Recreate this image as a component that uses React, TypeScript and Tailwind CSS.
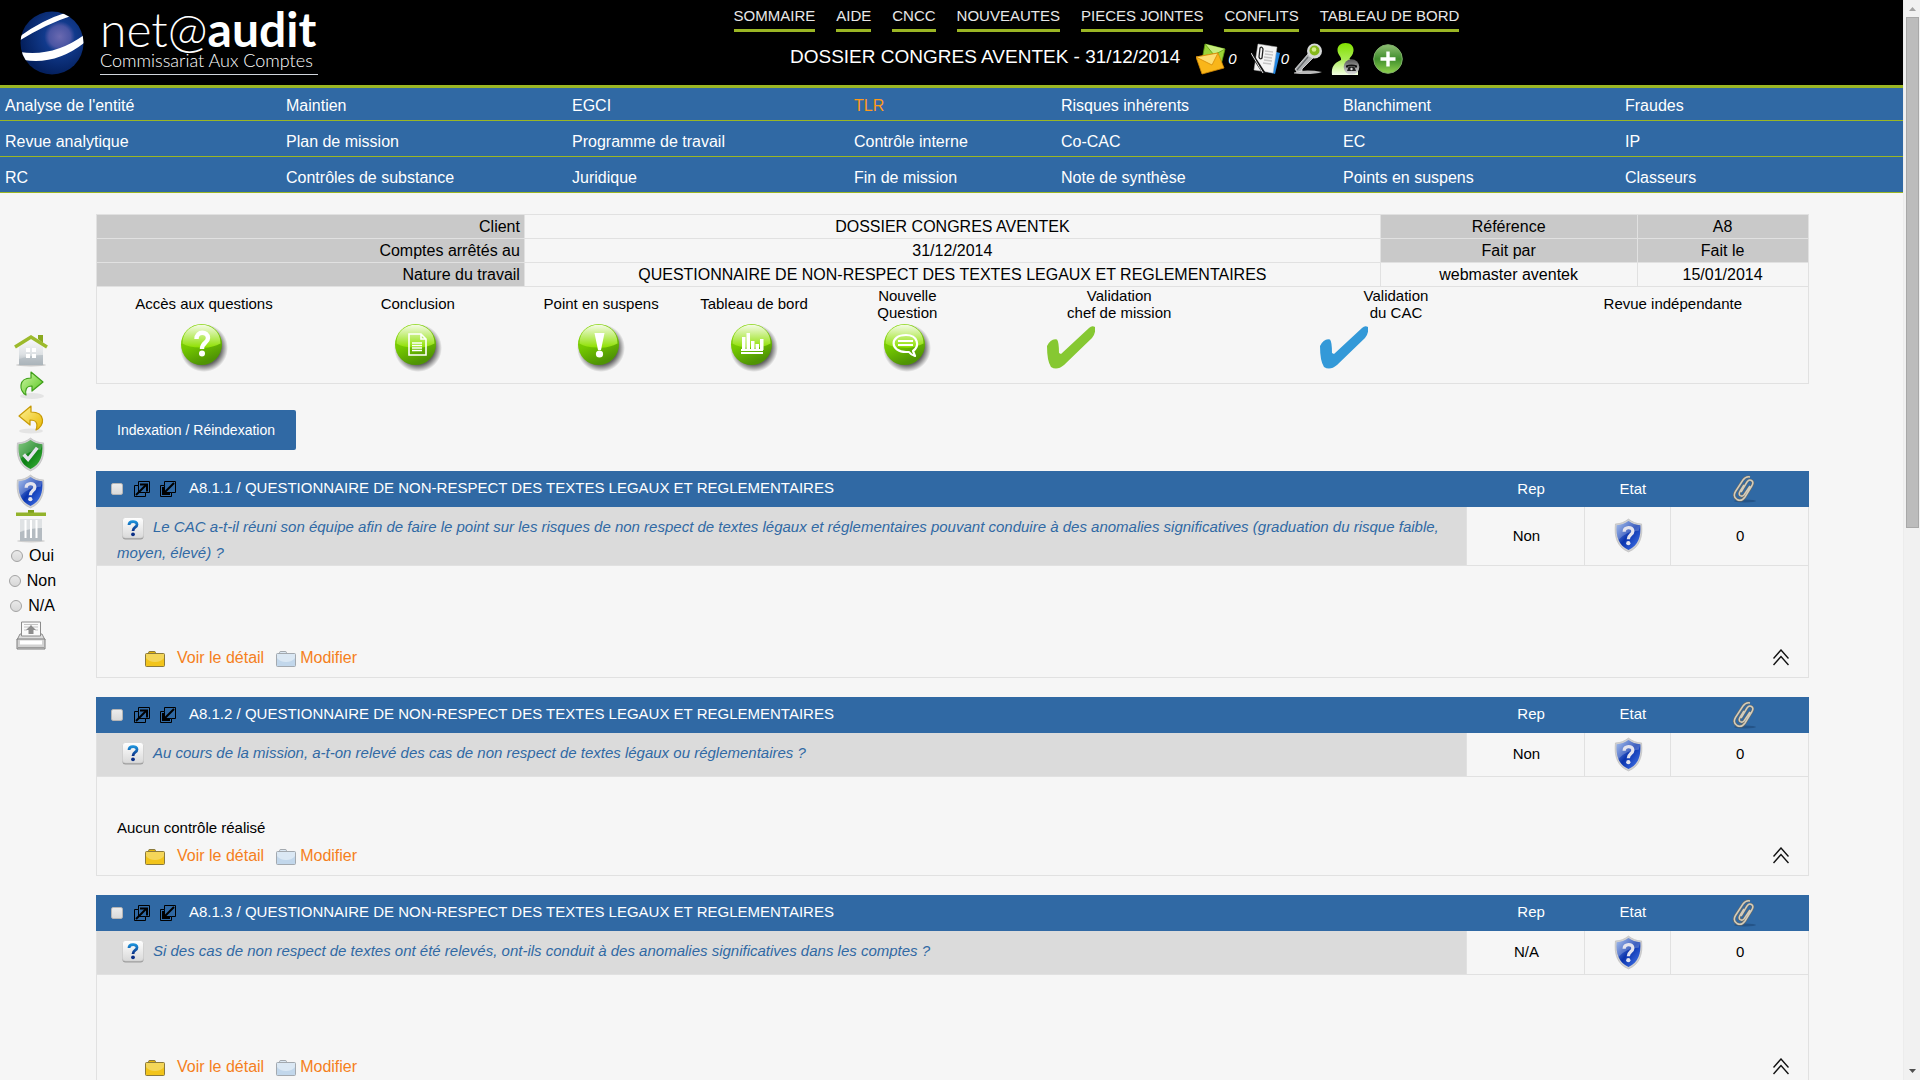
import React from "react";

const NAV: string[][] = [
  ["Analyse de l'entité", "Maintien", "EGCI", "TLR", "Risques inhérents", "Blanchiment", "Fraudes"],
  ["Revue analytique", "Plan de mission", "Programme de travail", "Contrôle interne", "Co-CAC", "EC", "IP"],
  ["RC", "Contrôles de substance", "Juridique", "Fin de mission", "Note de synthèse", "Points en suspens", "Classeurs"],
];

const MENU = ["SOMMAIRE", "AIDE", "CNCC", "NOUVEAUTES", "PIECES JOINTES", "CONFLITS", "TABLEAU DE BORD"];

const TITLE = "QUESTIONNAIRE DE NON-RESPECT DES TEXTES LEGAUX ET REGLEMENTAIRES";

type Question = { id: string; text: string; rep: string; files: number; note?: string };

const QUESTIONS: Question[] = [
  {
    id: "A8.1.1",
    text: "Le CAC a-t-il réuni son équipe afin de faire le point sur les risques de non respect de textes légaux et réglementaires pouvant conduire à des anomalies significatives (graduation du risque faible, moyen, élevé) ?",
    rep: "Non",
    files: 0,
  },
  {
    id: "A8.1.2",
    text: "Au cours de la mission, a-t-on relevé des cas de non respect de textes légaux ou réglementaires ?",
    rep: "Non",
    files: 0,
    note: "Aucun contrôle réalisé",
  },
  {
    id: "A8.1.3",
    text: "Si des cas de non respect de textes ont été relevés, ont-ils conduit à des anomalies significatives dans les comptes ?",
    rep: "N/A",
    files: 0,
  },
];

/* ---------- drawings ---------- */

function Globe() {
  return (
    <svg width="64" height="64" viewBox="0 0 64 64" aria-hidden="true">
      <defs>
        <radialGradient id="globe" cx="0.62" cy="0.4" r="0.6">
          <stop offset="0" stopColor="#6a69b0" />
          <stop offset="0.28" stopColor="#4a55a3" />
          <stop offset="0.4" stopColor="#113a8c" />
          <stop offset="1" stopColor="#04205e" />
        </radialGradient>
        <clipPath id="globeClip"><circle cx="32" cy="32" r="31.5" /></clipPath>
      </defs>
      <g clipPath="url(#globeClip)">
        <rect width="64" height="64" fill="url(#globe)" />
        <path d="M-1 26 Q22 9 45 2 L51 5 Q26 13 -1 30Z" fill="#fff" />
        <path d="M0 41 Q34 46 64 24 V32 Q36 54 4 49Z" fill="#fff" />
      </g>
    </svg>
  );
}

function MailIcon() {
  return (
    <svg width="30" height="32" viewBox="0 0 30 32" aria-hidden="true">
      <path d="M9 1 L29 6 L25 22 L6 17Z" fill="#9bd437" stroke="#5f9c12" strokeWidth="0.8" />
      <path d="M9 1 L18 12 L29 6" fill="#c7ed7d" stroke="#5f9c12" strokeWidth="0.8" />
      <path d="M0 14 L22 10 L28 25 L6 31Z" fill="#f9b61a" stroke="#d68a05" strokeWidth="0.8" />
      <path d="M0 14 L16 22 L22 10Z" fill="#fede72" stroke="#d68a05" strokeWidth="0.8" />
    </svg>
  );
}

function NotesIcon() {
  return (
    <svg width="30" height="32" viewBox="0 0 30 32" aria-hidden="true">
      <path d="M14 6 L29 10 L24 31 L10 27Z" fill="#2285e0" />
      <path d="M7 1 L26 4 L22 30 L3 27Z" fill="#f4f4f4" stroke="#bbb" strokeWidth="0.5" />
      <path d="M14 8l8 1M14 11l8 1M13 14l8 1M13 17l8 1M12 20l8 1" stroke="#c4c4c4" strokeWidth="1.3" />
      <path d="M8 14 L9 5 Q11 3 12 6 L11 15 Q9 17 8 14Z" fill="none" stroke="#222" strokeWidth="1.3" />
      <path d="M0 10 L13 30" stroke="#111" strokeWidth="3" />
      <path d="M0 10 L12 30" stroke="#ddd" strokeWidth="1" />
    </svg>
  );
}

function KeyIcon() {
  return (
    <svg width="30" height="32" viewBox="0 0 30 32" aria-hidden="true">
      <path d="M1 29.500 Q12 26 29 29 Q20 32 1 30.500Z" fill="#b9b9b9" />
      <path d="M15 11 L20 15 L9 26 L9 28 L4 29 L2 26Z" fill="#aeb1b3" stroke="#e4e4e4" strokeWidth="0.8" />
      <path d="M15 14 L4 27" stroke="#62676a" strokeWidth="1.2" />
      <circle cx="21.500" cy="8" r="7.500" fill="#d6d8d8" />
      <circle cx="21.500" cy="7.500" r="5" fill="#86b81c" />
      <circle cx="21" cy="6.500" r="2.300" fill="#d5ee8b" />
    </svg>
  );
}

function UserIcon() {
  return (
    <svg width="30" height="32" viewBox="0 0 30 32" aria-hidden="true">
      <defs>
        <linearGradient id="usr" x1="0" y1="0" x2="0" y2="1">
          <stop offset="0" stopColor="#82e000" />
          <stop offset="0.5" stopColor="#a8ec50" />
          <stop offset="1" stopColor="#f4ffe4" />
        </linearGradient>
        <linearGradient id="usrBadge" x1="0" y1="0" x2="0" y2="1">
          <stop offset="0" stopColor="#555" />
          <stop offset="0.5" stopColor="#999" />
          <stop offset="1" stopColor="#e2e2e2" />
        </linearGradient>
      </defs>
      <path d="M14.500 0 C20 0 23 3.500 22.500 8 C22 12 19.500 14 18.500 15.500 C19 18 25 18 27 23 V32 H1 C0 24 3 20 10 17 C11 14 6.500 12 6.500 7 C6.500 3 9.500 0 14.500 0Z" fill="url(#usr)" />
      <circle cx="20.500" cy="24" r="7.800" fill="url(#usrBadge)" />
      <path d="M15 22.500 Q20.500 20.500 26 22.500 V24.500 H24 V23.500 H17 V24.500 H15Z" fill="#111" />
      <path d="M17.500 24 H23.500 L25 28 H16Z" fill="#222" />
      <circle cx="20.500" cy="26" r="1.200" fill="#ddd" />
    </svg>
  );
}

function PlusIcon() {
  return (
    <svg width="30" height="32" viewBox="0 0 30 32" aria-hidden="true">
      <defs>
        <linearGradient id="plus" x1="0" y1="0" x2="0" y2="1">
          <stop offset="0" stopColor="#8fbf74" />
          <stop offset="0.5" stopColor="#3f8d2c" />
          <stop offset="1" stopColor="#8fd24e" />
        </linearGradient>
      </defs>
      <circle cx="15" cy="16" r="14.300" fill="url(#plus)" stroke="#7fae6a" strokeWidth="1" />
      <path d="M15 8.500v15M7.500 16h15" stroke="#fff" strokeWidth="3.400" />
    </svg>
  );
}

function HomeIcon() {
  return (
    <svg width="36" height="33" viewBox="0 0 36 33" aria-hidden="true">
      <defs>
        <linearGradient id="metal" x1="0" y1="0" x2="0" y2="1">
          <stop offset="0" stopColor="#fbfbfc" />
          <stop offset="0.6" stopColor="#dde1e4" />
          <stop offset="1" stopColor="#a7afb5" />
        </linearGradient>
      </defs>
      <ellipse cx="18" cy="31" rx="15" ry="1.500" fill="#c9c9c9" />
      <path d="M6 13 L18 4 L30 13 V31 H6Z" fill="url(#metal)" />
      <path d="M6 25 Q20 21 30 21 V31 H6Z" fill="#aeb8be" fillOpacity="0.600" />
      <path d="M25 1h5v8l-5-4z" fill="#8aa91f" />
      <path d="M2 13 L18 3 L34 13" fill="none" stroke="#9cba2c" strokeWidth="3.400" />
      <path d="M13 14h4v4h-4zM19 14h4v4h-4zM13 20h4v4h-4zM19 20h4v4h-4z" fill="#fff" />
    </svg>
  );
}

function RedoIcon() {
  return (
    <svg width="28" height="30" viewBox="0 0 28 30" aria-hidden="true">
      <defs>
        <linearGradient id="redo" x1="0" y1="0" x2="1" y2="1">
          <stop offset="0" stopColor="#d2f7a8" />
          <stop offset="1" stopColor="#52c41a" />
        </linearGradient>
      </defs>
      <ellipse cx="15" cy="26" rx="12" ry="3" fill="#e4e4e4" />
      <path d="M14 2 L26 12 L15 21 V16 C9 16 8 20 9 25 C2 21 1 8 14 8Z" fill="url(#redo)" stroke="#3f9f19" strokeWidth="1.200" strokeLinejoin="round" />
    </svg>
  );
}

function UndoIcon() {
  return (
    <svg width="28" height="30" viewBox="0 0 28 30" aria-hidden="true">
      <defs>
        <linearGradient id="undo" x1="0" y1="0" x2="1" y2="1">
          <stop offset="0" stopColor="#fdf39a" />
          <stop offset="1" stopColor="#e9b800" />
        </linearGradient>
      </defs>
      <ellipse cx="14" cy="27" rx="12" ry="2.500" fill="#e4e4e4" />
      <path d="M14 2 L2 12 L13 21 V16 C20 16 21 20 19 26 C28 22 29 8 14 8Z" fill="url(#undo)" stroke="#c79a06" strokeWidth="1.200" strokeLinejoin="round" />
    </svg>
  );
}

function Shield({ kind }: { kind: "ok" | "ask" }) {
  const ok = kind === "ok";
  return (
    <svg width="29" height="35" viewBox="0 0 30 36" aria-hidden="true">
      <defs>
        <linearGradient id="shGreen" x1="0" y1="0" x2="1" y2="1">
          <stop offset="0" stopColor="#5fb95c" />
          <stop offset="0.5" stopColor="#0c7f14" />
          <stop offset="1" stopColor="#3fb53c" />
        </linearGradient>
        <linearGradient id="shBlue" x1="0" y1="0" x2="1" y2="1">
          <stop offset="0" stopColor="#8fb0ea" />
          <stop offset="0.5" stopColor="#0a34ae" />
          <stop offset="1" stopColor="#4a7bf0" />
        </linearGradient>
      </defs>
      <path d="M15 1 C19 4 23 6 28.500 6 C30 19 27 30 15 35 C3 30 0 19 1.500 6 C7 6 11 4 15 1Z" fill="#d0d0d2" stroke="#b8b8b8" strokeWidth="0.600" />
      <path d="M15 3 C19 5.500 22 7 27.200 7.500 C28 19 25.500 28.500 15 33 C4.500 28.500 2 19 2.800 7.500 C8 7 11 5.500 15 3Z" fill={ok ? "url(#shGreen)" : "url(#shBlue)"} />
      <path d="M15 3 C19 5.500 22 7 27.200 7.500 Q26.500 11 25.500 13 Q13 13 4 23 Q2.400 15 2.800 7.500 C8 7 11 5.500 15 3Z" fill="#fff" fillOpacity="0.220" />
      {ok ? (
        <path d="M8 18 L12.500 23 L22 11" fill="none" stroke="#e3e3ec" strokeWidth="3.600" />
      ) : (
        <>
          <path d="M10.500 14 C10.500 8.500 19.500 8.500 19.500 13.500 C19.500 17 14.800 17 14.800 22" fill="none" stroke="#e4e4ee" strokeWidth="3.400" />
          <circle cx="14.800" cy="26" r="2.200" fill="#e4e4ee" />
        </>
      )}
    </svg>
  );
}

function TrashIcon() {
  return (
    <svg width="32" height="33" viewBox="0 0 32 33" aria-hidden="true">
      <ellipse cx="16" cy="31" rx="14" ry="1.500" fill="#cfcfcf" />
      <path d="M5 9 H27 V31 H5Z" fill="#dfe2e4" />
      <path d="M5 22 Q16 18 27 18 V31 H5Z" fill="#a9b2b8" fillOpacity="0.800" />
      <path d="M10.500 10v18M16 10v18M21.500 10v18" stroke="#fff" strokeWidth="2" />
      <path d="M13 0h6v3h-6z" fill="#7da01c" />
      <path d="M1 2.500h30v3.500h-30z" fill="#93b32b" />
    </svg>
  );
}

function PrinterIcon() {
  return (
    <svg width="30" height="30" viewBox="0 0 30 30" aria-hidden="true">
      <path d="M4 13 H26 L29 19 H1Z" fill="#dcdcdc" stroke="#8c8c8c" />
      <path d="M5.500 1 H24.500 V15 H5.500Z" fill="#fafafa" stroke="#8c8c8c" />
      <path d="M8 3.500h14M8 6h5M17 6h5M8 9h3M19 9h3" stroke="#c4c4c4" />
      <path d="M15 4 L20 9 H17.500 V13 H12.500 V9 H10Z" fill="#8d8d8d" />
      <path d="M1 18 H29 V28 H1Z" fill="#d2d2d2" stroke="#7d7d7d" />
      <path d="M4 21.500h22" stroke="#fff" strokeWidth="4" />
      <path d="M2 26.500h26" stroke="#9c9c9c" />
    </svg>
  );
}

type BallKind = "ask" | "doc" | "warn" | "chart" | "chat";

function Ball({ kind }: { kind: BallKind }) {
  return (
    <svg width="50" height="54" viewBox="0 0 50 54" aria-hidden="true">
      <defs>
        <linearGradient id="ball" x1="0" y1="0" x2="0.400" y2="1">
          <stop offset="0" stopColor="#8fdc10" />
          <stop offset="0.550" stopColor="#74c800" />
          <stop offset="1" stopColor="#4f9404" />
        </linearGradient>
        <linearGradient id="ballGloss" x1="0" y1="0" x2="0" y2="1">
          <stop offset="0" stopColor="#f4fbe6" />
          <stop offset="1" stopColor="#8ee000" />
        </linearGradient>
        <radialGradient id="ballShade">
          <stop offset="0.700" stopColor="#000" stopOpacity="0.600" />
          <stop offset="1" stopColor="#000" stopOpacity="0" />
        </radialGradient>
      </defs>
      <circle cx="25" cy="28" r="24" fill="url(#ballShade)" />
      <circle cx="22.500" cy="24.500" r="20.500" fill="url(#ball)" />
      <path d="M3.500 23.500 C3.500 -1.500 41.500 -1.500 41.500 23.500 Q32.500 28.500 21.500 27.500 Q9.500 27.500 3.500 23.500Z" fill="url(#ballGloss)" />
      {kind === "ask" && (
        <>
          <path d="M17.500 19 C17.500 10.500 29 11 29 18 C29 23 23 22.500 23 29" fill="none" stroke="#fff" strokeWidth="4.400" />
          <circle cx="23" cy="33.500" r="3" fill="#fff" />
        </>
      )}
      {kind === "doc" && (
        <>
          <path d="M16 14 H28 L33 19 V35 H16Z M28 14 V19 H33" fill="none" stroke="#fff" strokeWidth="1.600" />
          <path d="M19 23h10M19 25.500h10M19 28h10M19 30.500h10" stroke="#fff" strokeWidth="1.500" />
        </>
      )}
      {kind === "warn" && (
        <>
          <path d="M18.500 13 H28.500 L25 30 H22Z" fill="#fff" />
          <circle cx="23.500" cy="34" r="3.600" fill="#fff" />
        </>
      )}
      {kind === "chart" && (
        <path d="M12 32h22v2h-22zM13 17h3.500v13h-3.500zM17.500 13h3.500v17h-3.500zM22 21h3.500v9h-3.500zM26.500 24h3.500v6h-3.500zM31 19h3.500v11h-3.500zM12 29h22v2h-22z" fill="#fff" />
      )}
      {kind === "chat" && (
        <>
          <path d="M33 36 L31 31 C38 26 36 15 24 15 C7 15 8 32 24 32 L27 32 Q29 35 33 36Z" fill="none" stroke="#fff" strokeWidth="2.200" strokeLinejoin="round" />
          <path d="M16 21h15M16 25h15" stroke="#fff" strokeWidth="2.200" />
        </>
      )}
    </svg>
  );
}

function BigCheck({ className }: { className: string }) {
  return (
    <svg width="48" height="44" viewBox="0 0 48 44" className={className} aria-hidden="true">
      <path d="M0 20 Q4 12 10 13.500 Q12 16 12 27 L14 28 L42 2 Q45 -1 48 1 Q49 7 45 12 L17 39 Q10 45 4 41 Q0 35 0 20Z" fill="currentColor" />
    </svg>
  );
}

function ArrowBox({ out }: { out: boolean }) {
  return (
    <svg width="16" height="16" viewBox="0 0 16 16" fill="none" stroke="#000" aria-hidden="true">
      {out ? (
        <>
          <path d="M4.500 0.500h11v11h-4v4h-11v-11h4z M4.500 4.500v7h7" />
          <path d="M2 14 L12 4" strokeWidth="2" />
          <path d="M6 3.500h7v7" strokeWidth="2" />
        </>
      ) : (
        <>
          <path d="M4.500 0.500h11v11h-4v4h-11v-11h4z M4.500 4.500v7h7" />
          <path d="M14 2 L4 12" strokeWidth="2" />
          <path d="M3 6v7h7" strokeWidth="2" />
        </>
      )}
    </svg>
  );
}

function HelpTile() {
  return (
    <svg width="22" height="23" viewBox="0 0 22 23" className="mr-[9px] ml-[5px] inline-block align-middle" aria-hidden="true">
      <defs>
        <linearGradient id="tile" x1="0" y1="0" x2="0" y2="1">
          <stop offset="0" stopColor="#fff" />
          <stop offset="1" stopColor="#d9d9d9" />
        </linearGradient>
        <linearGradient id="tileQ" x1="0" y1="0" x2="0" y2="1">
          <stop offset="0" stopColor="#1c8fd8" />
          <stop offset="1" stopColor="#0b2f86" />
        </linearGradient>
      </defs>
      <rect x="0.500" y="1.500" width="21" height="21" rx="3" fill="#9d9d9d" />
      <rect x="0.500" y="0.500" width="21" height="20.500" rx="3" fill="url(#tile)" stroke="#cfcfcf" strokeWidth="0.600" />
      <path d="M7 8 C7 3.500 15 3.500 15 7.500 C15 10.500 11 10 11 14" fill="none" stroke="url(#tileQ)" strokeWidth="2.800" />
      <circle cx="11" cy="17.300" r="1.900" fill="#0b2f86" />
    </svg>
  );
}

function Folder({ blue }: { blue?: boolean }) {
  return (
    <svg width="20" height="16" viewBox="0 0 20 16" className="mt-0.5" aria-hidden="true">
      <path d="M3.500 3 V1.500 Q3.500 0.500 5 0.500 H9 Q10.500 0.500 10.500 1.500 V3" fill={blue ? "#dce8f3" : "#e5b50c"} stroke={blue ? "#a3a9af" : "#8b7a3c"} />
      <rect x="0.500" y="2.500" width="19" height="13" rx="1" fill={blue ? "#c2d7eb" : "#f2c41b"} stroke={blue ? "#a3a9af" : "#8b7a3c"} />
      <path d="M1 3h18v4q-3 4 -9 4t-9 -4z" fill={blue ? "#dbe8f4" : "#f4d659"} />
    </svg>
  );
}

const CLIP_PATH =
  "M9 17 L15 7 Q17 4 19.500 5.500 Q22 7 20 10.500 L13 22 Q9.500 27 5 24.500 Q0.500 21.500 3.500 16.500 L11 5 Q14 1 18 2 M18 11 L12 20 Q10 22 8 20.500 Q6.500 19 8 16.500 L12 10";

function Clip() {
  return (
    <svg width="26" height="28" viewBox="0 0 26 28" fill="none" aria-hidden="true">
      <ellipse cx="13" cy="26" rx="11" ry="1.500" fill="#245488" />
      <path d={CLIP_PATH} stroke="#6f6a5e" strokeWidth="2.600" />
      <path d={CLIP_PATH} stroke="#d3cdbd" strokeWidth="1.500" />
    </svg>
  );
}

function Collapse() {
  return (
    <svg width="16" height="17" viewBox="0 0 16 17" fill="none" stroke="#111" strokeWidth="1.400" aria-hidden="true">
      <path d="M0.500 9.500 L8 1 L15.500 9.500 M0.500 16 L8 7.500 L15.500 16" />
    </svg>
  );
}

/* ---------- sections ---------- */

function Header() {
  return (
    <header className="flex h-[88px] border-b-[3px] border-[#9bb624] bg-black text-white">
      <a href="#" className="flex w-[320px] shrink-0 gap-4 pl-5" aria-label="net@audit">
        <span className="pt-[11px]"><Globe /></span>
        <span className="flex w-[218px] flex-col font-[Lato,sans-serif] whitespace-nowrap">
          <span className="text-[48px] leading-[58px] font-light">net@<b className="font-bold">audit</b></span>
          <span className="-mt-[7px] border-b border-gray-300 pb-[5px] text-[18px] leading-[18px] font-light">Commissariat Aux Comptes</span>
        </span>
      </a>
      <div className="flex flex-1 flex-col items-center pr-[30px]">
        <nav className="flex gap-[21px] pt-[7px] text-[15px]">
          {MENU.map((m) => (
            <a key={m} href="#" className="border-b-[3px] border-[#9bb624] pb-1 leading-[18px] text-[#e8e8e8]">{m}</a>
          ))}
        </nav>
        <div className="mt-[11px] flex items-center">
          <h1 className="mr-4 pb-1 text-[19px]">DOSSIER CONGRES AVENTEK - 31/12/2014</h1>
          <button className="flex items-center gap-0.5 text-[15px] italic" aria-label="Messages"><MailIcon />0</button>
          <button className="ml-[14px] flex items-center text-[15px] italic" aria-label="Notes"><NotesIcon />0</button>
          <button className="ml-1" aria-label="Accès"><KeyIcon /></button>
          <button className="ml-2" aria-label="Utilisateur"><UserIcon /></button>
          <button className="ml-3" aria-label="Ajouter"><PlusIcon /></button>
        </div>
      </div>
    </header>
  );
}

function MainNav() {
  return (
    <nav className="bg-[#3069a4] text-base leading-[18px] text-white">
      {NAV.map((row, i) => (
        <div
          key={row[0]}
          className={`grid grid-cols-[281fr_286fr_282fr_207fr_282fr_282fr_283fr] border-b border-[#9bb624] pb-[5px] ${i === 0 ? "pt-[9px]" : "pt-3"}`}
        >
          {row.map((c) => (
            <a key={c} href="#" className={`pl-[5px] ${c === "TLR" ? "text-[#ff9a1a]" : ""}`}>{c}</a>
          ))}
        </div>
      ))}
    </nav>
  );
}

function Sidebar() {
  return (
    <aside className="flex w-24 shrink-0 flex-col pt-[141px]">
      <div className="flex w-[61px] flex-col items-center">
        <button aria-label="Accueil"><HomeIcon /></button>
        <button className="mt-[3px]" aria-label="Suivant"><RedoIcon /></button>
        <button className="mt-1" aria-label="Précédent"><UndoIcon /></button>
        <button className="mt-[3px]" aria-label="Valider"><Shield kind="ok" /></button>
        <button className="mt-0.5" aria-label="À traiter"><Shield kind="ask" /></button>
        <button className="mt-px" aria-label="Supprimer"><TrashIcon /></button>
        {["Oui", "Non", "N/A"].map((r) => (
          <label key={r} className="flex h-[25px] items-center gap-[6px] pl-1 text-base">
            <input
              type="radio"
              name="reponse"
              className="size-3 appearance-none rounded-full border border-[#a3a3a3] bg-linear-to-b from-[#e9e9e9] to-[#d8d8d8]"
            />
            {r}
          </label>
        ))}
        <button className="mt-[3px]" aria-label="Imprimer"><PrinterIcon /></button>
      </div>
    </aside>
  );
}

const LABEL_CELL = "border border-[#e1e1e1] bg-[#c9c9c9] font-normal";
const CELL = "border border-[#e1e1e1]";

function Dossier() {
  return (
    <section>
      <table className="w-full table-fixed border-collapse text-center text-base leading-[23px]">
        <colgroup>
          <col className="w-[25%]" />
          <col className="w-[50%]" />
          <col className="w-[15%]" />
          <col className="w-[10%]" />
        </colgroup>
        <tbody>
          <tr>
            <th className={`${LABEL_CELL} pr-1 text-right`}>Client</th>
            <td className={CELL}>DOSSIER CONGRES AVENTEK</td>
            <th className={LABEL_CELL}>Référence</th>
            <td className={LABEL_CELL}>A8</td>
          </tr>
          <tr>
            <th className={`${LABEL_CELL} pr-1 text-right`}>Comptes arrêtés au</th>
            <td className={CELL}>31/12/2014</td>
            <th className={LABEL_CELL}>Fait par</th>
            <th className={LABEL_CELL}>Fait le</th>
          </tr>
          <tr>
            <th className={`${LABEL_CELL} pr-1 text-right`}>Nature du travail</th>
            <td className={CELL}>{TITLE}</td>
            <td className={CELL}>webmaster aventek</td>
            <td className={CELL}>15/01/2014</td>
          </tr>
        </tbody>
      </table>
      <div className="grid h-[97px] grid-cols-[214fr_214fr_153fr_153fr_154fr_270fr_284fr_270fr] border border-t-0 border-[#e1e1e1] text-center text-[15px] leading-[17px]">
        <Tool label={["Accès aux questions"]}><Ball kind="ask" /></Tool>
        <Tool label={["Conclusion"]}><Ball kind="doc" /></Tool>
        <Tool label={["Point en suspens"]}><Ball kind="warn" /></Tool>
        <Tool label={["Tableau de bord"]}><Ball kind="chart" /></Tool>
        <Tool label={["Nouvelle", "Question"]}><Ball kind="chat" /></Tool>
        <Tool label={["Validation", "chef de mission"]}><BigCheck className="mt-[6px] mr-24 text-[#86c832]" /></Tool>
        <Tool label={["Validation", "du CAC"]}><BigCheck className="mt-[6px] mr-[104px] text-[#3399d8]" /></Tool>
        <Tool label={["Revue indépendante"]} />
      </div>
    </section>
  );
}

function Tool({ label, children }: { label: string[]; children?: React.ReactNode }) {
  return (
    <button className="flex flex-col items-center">
      <span className="flex h-[33px] flex-col justify-center">
        {label.map((l) => (
          <span key={l}>{l}</span>
        ))}
      </span>
      {children}
    </button>
  );
}

function QuestionBlock({ q }: { q: Question }) {
  return (
    <article className="border-b border-[#e1e1e1]">
      <header className="grid h-9 grid-cols-[80%_7%_5%_8%] items-center bg-[#3069a4] text-[15px] text-white">
        <div className="flex items-center pl-[15px]">
          <input
            type="checkbox"
            aria-label={q.id}
            className="size-3 appearance-none rounded-[2px] border border-[#b5b5b5] bg-linear-to-b from-[#ececec] to-[#dadada]"
          />
          <button className="ml-[11px]" aria-label="Ouvrir"><ArrowBox out /></button>
          <button className="ml-[10px]" aria-label="Réduire"><ArrowBox out={false} /></button>
          <h2 className="ml-[13px] pb-0.5 leading-[32px]">{q.id} / {TITLE}</h2>
        </div>
        <span className="pl-[10px] text-center">Rep</span>
        <span className="pl-2 text-center">Etat</span>
        <span className="flex justify-center pl-[10px]"><Clip /></span>
      </header>
      <div className="grid grid-cols-[80%_7%_5%_8%] border-x border-[#e1e1e1] text-[15px] *:border-b *:border-[#e1e1e1]">
        <p className="min-h-[44px] bg-[#dbdbdb] pt-[7px] pr-5 pl-5 leading-[25px] text-[#3069a4] italic">
          <HelpTile />
          {q.text}
        </p>
        <span className="flex items-center justify-center border-x pl-0.5">{q.rep}</span>
        <span className="flex items-center justify-center border-r pl-0.5"><Shield kind="ask" /></span>
        <span className="flex items-center justify-center pl-0.5">{q.files}</span>
      </div>
      <div className={`flex flex-col justify-end border-x border-[#e1e1e1] pb-[7px] ${q.note ? "h-[98px]" : "h-[111px]"}`}>
        {q.note && <p className="pb-[6px] pl-5 text-[15px] leading-[20px]">{q.note}</p>}
        <div className="flex items-center pr-[19px] pl-12 text-base leading-6 text-[#f57f20]">
          <a href="#" className="flex items-center gap-3"><Folder />Voir le détail</a>
          <a href="#" className="ml-3 flex items-center gap-1"><Folder blue />Modifier</a>
          <button className="ml-auto" aria-label="Replier"><Collapse /></button>
        </div>
      </div>
    </article>
  );
}

function Scrollbar() {
  return (
    <div className="flex w-[17px] shrink-0 flex-col items-center border-l border-[#ececec] bg-[#f1f1f1]" aria-hidden="true">
      <svg width="15" height="17" viewBox="0 0 15 17"><path d="M4 11 L7.500 7 L11 11Z" fill="#a3a3a3" /></svg>
      <div className="h-[511px] w-[13px] border border-[#a8a8a8] bg-[#bcbcbc]" />
      <svg className="mt-auto" width="15" height="17" viewBox="0 0 15 17"><path d="M4 6 L7.500 10 L11 6Z" fill="#505050" /></svg>
    </div>
  );
}

export default function App() {
  return (
    <div className="flex h-screen overflow-hidden bg-[#f6f6f6] font-['Liberation_Sans',Arial,sans-serif] text-black">
      <div className="min-w-0 flex-1">
        <Header />
        <MainNav />
        <div className="flex">
          <Sidebar />
          <main className="w-[90%] pt-[21px]">
            <Dossier />
            <button className="mt-[26px] h-10 rounded-[2px] bg-[#3069a4] px-[21px] text-[14px] text-white">Indexation / Réindexation</button>
            <div className="mt-[21px] flex flex-col gap-[19px]">
              {QUESTIONS.map((q) => (
                <QuestionBlock key={q.id} q={q} />
              ))}
            </div>
          </main>
        </div>
      </div>
      <Scrollbar />
    </div>
  );
}
